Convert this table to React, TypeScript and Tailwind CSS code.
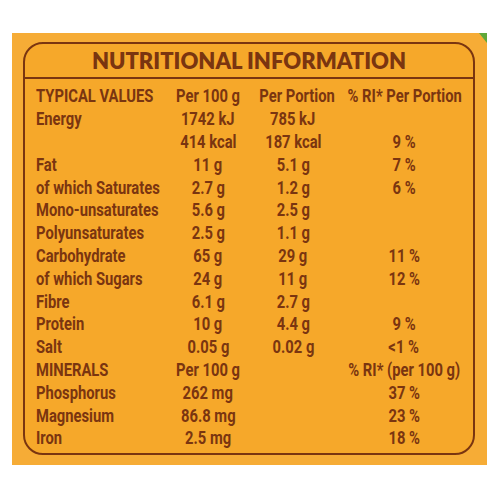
import React from "react";

type Row = { l: string; a?: string; b?: string; c?: string };

const rows: Row[] = [
  { l: "TYPICAL VALUES", a: "Per 100 g", b: "Per Portion", c: "% RI* Per Portion" },
  { l: "Energy", a: "1742 kJ", b: "785 kJ" },
  { l: "", a: "414 kcal", b: "187 kcal", c: "9 %" },
  { l: "Fat", a: "11 g", b: "5.1 g", c: "7 %" },
  { l: "of which Saturates", a: "2.7 g", b: "1.2 g", c: "6 %" },
  { l: "Mono-unsaturates", a: "5.6 g", b: "2.5 g" },
  { l: "Polyunsaturates", a: "2.5 g", b: "1.1 g" },
  { l: "Carbohydrate", a: "65 g", b: "29 g", c: "11 %" },
  { l: "of which Sugars", a: "24 g", b: "11 g", c: "12 %" },
  { l: "Fibre", a: "6.1 g", b: "2.7 g" },
  { l: "Protein", a: "10 g", b: "4.4 g", c: "9 %" },
  { l: "Salt", a: "0.05 g", b: "0.02 g", c: "<1 %" },
  { l: "MINERALS", a: "Per 100 g", b: "", c: "% RI* (per 100 g)" },
  { l: "Phosphorus", a: "262 mg", b: "", c: "37 %" },
  { l: "Magnesium", a: "86.8 mg", b: "", c: "23 %" },
  { l: "Iron", a: "2.5 mg", b: "", c: "18 %" },
];

function T({ s, left }: { s?: string; left?: boolean }) {
  return (
    <span className={left ? "text-left" : "text-center"}>
      <span
        className={
          "inline-block scale-x-[0.82] " + (left ? "origin-left" : "origin-center")
        }
      >
        {s}
      </span>
    </span>
  );
}

export default function App() {
  return (
    <div className="w-[500px] h-[500px] bg-white pt-[33px] pl-[12px]">
      <div className="relative w-[475px] h-[432px] bg-[#f6ac36] pt-[9px] pl-[11px] pr-[12px] pb-[10px]">
        <svg className="absolute right-0 top-0" width="8" height="10" viewBox="0 0 8 10">
          <polygon points="0,0 8,0 8,10" fill="#5fa83a" />
        </svg>
        <div className="h-full rounded-[20px] border-2 border-[#7a3510] bg-[#f6a82a] text-[#7a3510]">
          <div className="h-[33px] flex items-center justify-center font-['Lato',sans-serif] font-extrabold text-[22px] tracking-[0px] leading-none">
            NUTRITIONAL INFORMATION
          </div>
          <div className="h-[2px] bg-[#7a3510] -mx-[2px]" />
          <div className="pt-[6px] pl-[11px] font-['Roboto',sans-serif] font-bold text-[18px]">
            {rows.map((r, i) => (
              <div
                key={i}
                className="grid grid-cols-[129px_86px_84px_138px] h-[22.8px] items-center leading-none whitespace-nowrap"
              >
                <T s={r.l} left />
                <T s={r.a} />
                <T s={r.b} />
                <T s={r.c} />
              </div>
            ))}
          </div>
        </div>
      </div>
    </div>
  );
}
